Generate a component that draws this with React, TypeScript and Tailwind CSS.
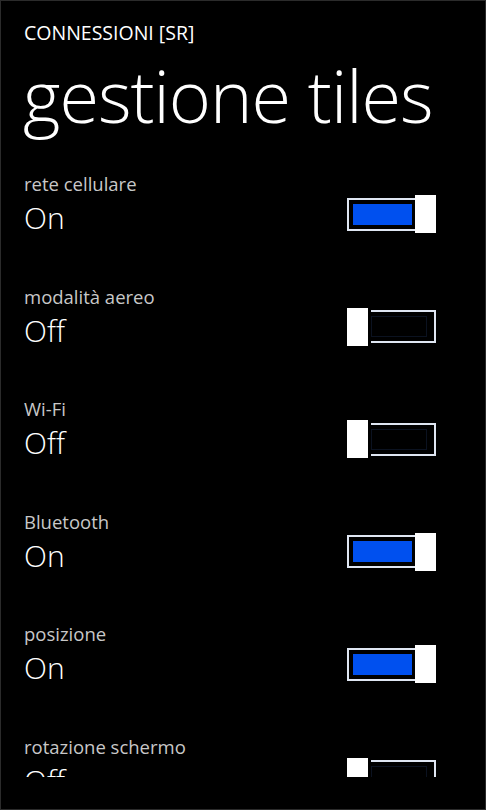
const font = { fontFamily: '"Open Sans", "Noto Sans", sans-serif' };

type Item = { label: string; on: boolean };

const items: Item[] = [
  { label: "rete cellulare", on: true },
  { label: "modalità aereo", on: false },
  { label: "Wi-Fi", on: false },
  { label: "Bluetooth", on: true },
  { label: "posizione", on: true },
  { label: "rotazione schermo", on: false },
];

function Toggle({ on }: { on: boolean }) {
  if (on) {
    return (
      <div className="flex items-center">
        <div className="flex h-[33px] w-[68px] items-center border-2 border-r-0 border-[#dfe6f2] pl-[4px]">
          <div className="h-[21px] w-[59px] bg-[#0050ef]" />
        </div>
        <div className="h-[38px] w-[21px] bg-white" />
      </div>
    );
  }
  return (
    <div className="flex items-center">
      <div className="h-[38px] w-[21px] bg-white" />
      <div className="ml-[3px] flex h-[33px] w-[65px] items-center border-2 border-l-0 border-[#dfe6f2] pr-[4px]">
        <div className="h-[21px] w-[56px] border border-[#0b1220]" />
      </div>
    </div>
  );
}

function Row({ item }: { item: Item }) {
  return (
    <div className="h-[112.5px] shrink-0 pl-[23px] pr-[49px]">
      <div className="text-[18.5px] leading-[26px] text-[#c8c8c8]">{item.label}</div>
      <div className="-mt-[1px] flex items-center justify-between">
        <div className="text-[30px] font-light leading-[44px] text-white">
          {item.on ? "On" : "Off"}
        </div>
        <div className="mt-[-8px]">
          <Toggle on={item.on} />
        </div>
      </div>
    </div>
  );
}

export default function App() {
  return (
    <div className="h-[810px] w-[486px] overflow-hidden border border-[#2b2b2b] bg-black" style={font}>
      <div className="flex h-[776px] flex-col overflow-hidden">
        <div className="pl-[23px] pt-[19px] text-[19.5px] leading-[26px] text-white">CONNESSIONI [SR]</div>
        <div className="-ml-[1px] mt-[3px] pl-[23px] text-[72px] font-light leading-[92px] tracking-[-1px] text-white">
          gestione tiles
        </div>
        <div className="mt-[30px] flex flex-col">
          {items.map((it) => (
            <Row key={it.label} item={it} />
          ))}
        </div>
      </div>
    </div>
  );
}
